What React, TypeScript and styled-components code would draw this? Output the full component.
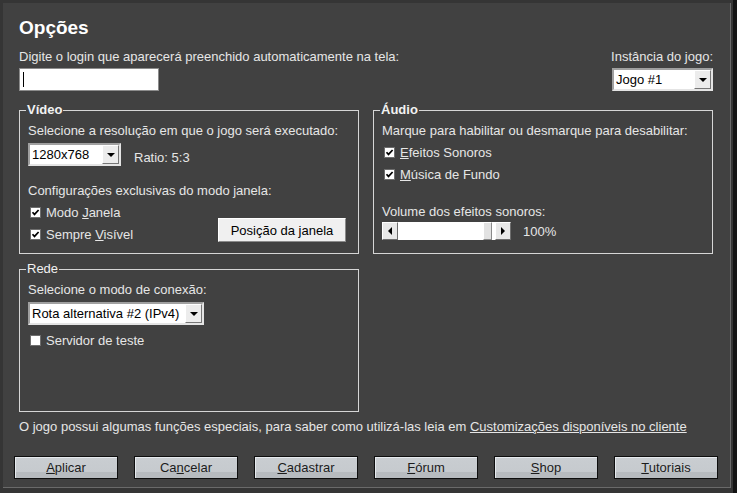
import styled, { createGlobalStyle } from 'styled-components';

const GlobalStyle = createGlobalStyle`
  html, body {
    margin: 0;
    padding: 0;
    background: #353535;
  }
  body {
    font-family: "Liberation Sans", Arial, sans-serif;
    font-size: 13px;
  }
`;

const Frame = styled.div`
  width: 737px;
  height: 493px;
  box-sizing: border-box;
  padding: 3px 0 0 3px;
  background: linear-gradient(to right, #353535 733px, #141414 733px);
`;

const Window = styled.div`
  width: 728px;
  height: 485px;
  box-sizing: border-box;
  background: #414141;
  border-right: 1px solid #6a6a6a;
  border-bottom: 1px solid #6a6a6a;
  padding: 14px 17px 0 16px;
  display: flex;
  flex-direction: column;
  color: #e6e6e6;
`;

const Title = styled.h1`
  margin: 0;
  font-size: 19px;
  line-height: 22px;
  font-weight: 700;
  color: #ffffff;
`;

const LoginRow = styled.div`
  display: flex;
  justify-content: space-between;
  margin-top: 10px;
`;

const Field = styled.div<{ $right?: boolean }>`
  display: flex;
  flex-direction: column;
  align-items: ${p => (p.$right ? 'flex-end' : 'flex-start')};
  gap: 4px;
`;

const Text = styled.div<{ $mt?: number }>`
  line-height: 15px;
  margin-top: ${p => p.$mt ?? 0}px;
  white-space: nowrap;
`;

const LoginBox = styled.div`
  position: relative;
  width: 140px;
  height: 23px;
  box-sizing: border-box;
  border: 1px solid #8c8c8c;
  background: #ffffff;

  &::after {
    content: '';
    position: absolute;
    left: 3px;
    top: 3px;
    width: 1px;
    height: 15px;
    background: #000;
  }
`;

const LoginInput = styled.input`
  width: 100%;
  height: 100%;
  box-sizing: border-box;
  border: none;
  outline: none;
  padding: 0 3px;
  background: transparent;
  caret-color: transparent;
  font: inherit;
`;

const ComboBox = styled.div<{ $w: number; $mt?: number }>`
  width: ${p => p.$w}px;
  height: 23px;
  box-sizing: border-box;
  margin-top: ${p => p.$mt ?? 0}px;
  display: flex;
  align-items: center;
  justify-content: space-between;
  background: #ffffff;
  border: 2px solid;
  border-color: #a0a0a0 #e4e4e4 #e4e4e4 #a0a0a0;
  padding: 0 0 0 2px;
  color: #000;
  line-height: 15px;
  white-space: nowrap;
`;

const ComboButton = styled.span`
  width: 17px;
  height: 19px;
  box-sizing: border-box;
  background: #ececec;
  border: 1px solid;
  border-color: #ffffff #767676 #767676 #ffffff;
  display: flex;
  align-items: center;
  justify-content: center;

  &::after {
    content: '';
    border-left: 4px solid transparent;
    border-right: 4px solid transparent;
    border-top: 4px solid #000;
  }
`;

const GroupGrid = styled.div`
  display: grid;
  grid-template-columns: 340px 340px;
  column-gap: 14px;
  row-gap: 7px;
  margin-top: 11px;
`;

const Group = styled.fieldset<{ $h?: number }>`
  margin: 0;
  padding: 5px 8px 8px;
  border: 1px solid #d6d6d6;
  min-width: 0;
  box-sizing: border-box;
  ${p => (p.$h ? `height: ${p.$h}px;` : '')}
`;

const Legend = styled.legend<{ $bold?: boolean }>`
  padding: 0 1px;
  margin-left: -2px;
  line-height: 16px;
  font-weight: ${p => (p.$bold ? 700 : 400)};
  color: #f2f2f2;
`;

const InlineRow = styled.div<{ $mt?: number }>`
  display: flex;
  align-items: center;
  gap: 13px;
  margin-top: ${p => p.$mt ?? 0}px;
`;

const Ratio = styled.span`
  line-height: 15px;
  margin-top: 6px;
`;

const CheckArea = styled.div<{ $mt?: number }>`
  display: flex;
  justify-content: space-between;
  margin-top: ${p => p.$mt ?? 0}px;
`;

const CheckList = styled.div<{ $mt?: number }>`
  display: flex;
  flex-direction: column;
  margin-top: ${p => p.$mt ?? 0}px;
`;

const CheckRow = styled.label`
  display: flex;
  align-items: center;
  gap: 5px;
  height: 22px;
  padding-left: 2px;
  white-space: nowrap;
`;

const Box = styled.span`
  width: 11px;
  height: 11px;
  box-sizing: border-box;
  border: 1px solid #6e6e6e;
  background: #ffffff;
  display: flex;
  align-items: center;
  justify-content: center;
`;

const WinButton = styled.button`
  align-self: flex-end;
  margin: 0 4px 3px 0;
  width: 128px;
  height: 24px;
  box-sizing: border-box;
  background: #f0f0f0;
  border: 1px solid;
  border-color: #ffffff #8a8a8a #8a8a8a #ffffff;
  font: inherit;
  color: #000;
  padding: 0;
`;

const SliderRow = styled.div`
  display: flex;
  align-items: center;
  gap: 12px;
  margin-top: 3px;
`;

const Slider = styled.div`
  display: flex;
  width: 129px;
  height: 18px;
`;

const ArrowBtn = styled.span<{ $dir: 'left' | 'right' }>`
  width: 16px;
  height: 18px;
  box-sizing: border-box;
  background: #e8e8e8;
  border: 1px solid;
  border-color: #ffffff #6e6e6e #6e6e6e #ffffff;
  display: flex;
  align-items: center;
  justify-content: center;

  &::after {
    content: '';
    border-top: 4px solid transparent;
    border-bottom: 4px solid transparent;
    ${p =>
      p.$dir === 'left'
        ? 'border-right: 4px solid #000;'
        : 'border-left: 4px solid #000;'}
  }
`;

const Track = styled.span`
  flex: 1;
  background: #ffffff;
  display: flex;
  justify-content: flex-end;
  padding-right: 3px;
`;

const Thumb = styled.span`
  width: 9px;
  box-sizing: border-box;
  background: #e2e2e2;
  border: 1px solid;
  border-color: #ffffff #8a8a8a #8a8a8a #ffffff;
`;

const Footer = styled.div`
  margin-top: 7px;
  line-height: 15px;
  white-space: nowrap;
`;

const Link = styled.a`
  color: inherit;
  text-decoration: underline;
`;

const ButtonRow = styled.div`
  display: flex;
  gap: 16px;
  margin: 22px -5px 0;
`;

const FooterButton = styled.button`
  width: 104px;
  height: 23px;
  box-sizing: border-box;
  padding: 0;
  border: 1px solid #0e0e0e;
  background: linear-gradient(to bottom, #c9cdd1 0%, #c6cace 70%, #b7bbbf 70%, #b7bbbf 100%);
  box-shadow: inset 1px 1px 0 #e6eaee;
  font: inherit;
  color: #1c1c1c;
`;

const Check = () => (
  <svg width="9" height="9" viewBox="0 0 9 9">
    <polyline points="1.5,4.2 3.5,6.4 7.6,2" fill="none" stroke="#000" strokeWidth="1.7" />
  </svg>
);

function CheckBox({ checked, children }: { checked?: boolean; children: React.ReactNode }) {
  return (
    <CheckRow>
      <Box>{checked && <Check />}</Box>
      <span>{children}</span>
    </CheckRow>
  );
}

function Combo({ value, width, mt }: { value: string; width: number; mt?: number }) {
  return (
    <ComboBox $w={width} $mt={mt}>
      <span>{value}</span>
      <ComboButton />
    </ComboBox>
  );
}

const buttons: [string, string, string][] = [
  ['', 'A', 'plicar'],
  ['Ca', 'n', 'celar'],
  ['', 'C', 'adastrar'],
  ['', 'F', 'órum'],
  ['', 'S', 'hop'],
  ['', 'T', 'utoriais'],
];

export default function App() {
  return (
    <Frame>
      <GlobalStyle />
      <Window>
        <Title>Opções</Title>

        <LoginRow>
          <Field>
            <Text>Digite o login que aparecerá preenchido automaticamente na tela:</Text>
            <LoginBox>
              <LoginInput type="text" />
            </LoginBox>
          </Field>
          <Field $right>
            <Text>Instância do jogo:</Text>
            <Combo value="Jogo #1" width={101} />
          </Field>
        </LoginRow>

        <GroupGrid>
          <Group>
            <Legend $bold>Vídeo</Legend>
            <Text>Selecione a resolução em que o jogo será executado:</Text>
            <InlineRow $mt={5}>
              <Combo value="1280x768" width={93} />
              <Ratio>Ratio: 5:3</Ratio>
            </InlineRow>
            <Text $mt={17}>Configurações exclusivas do modo janela:</Text>
            <CheckArea $mt={3}>
              <CheckList>
                <CheckBox checked>
                  Modo <u>J</u>anela
                </CheckBox>
                <CheckBox checked>
                  Sempre <u>V</u>isível
                </CheckBox>
              </CheckList>
              <WinButton>Posição da janela</WinButton>
            </CheckArea>
          </Group>

          <Group>
            <Legend $bold>Áudio</Legend>
            <Text>Marque para habilitar ou desmarque para desabilitar:</Text>
            <CheckList $mt={3}>
              <CheckBox checked>
                <u>E</u>feitos Sonoros
              </CheckBox>
              <CheckBox checked>
                <u>M</u>úsica de Fundo
              </CheckBox>
            </CheckList>
            <Text $mt={19}>Volume dos efeitos sonoros:</Text>
            <SliderRow>
              <Slider>
                <ArrowBtn $dir="left" />
                <Track>
                  <Thumb />
                </Track>
                <ArrowBtn $dir="right" />
              </Slider>
              <span>100%</span>
            </SliderRow>
          </Group>

          <Group $h={151}>
            <Legend>Rede</Legend>
            <Text>Selecione o modo de conexão:</Text>
            <Combo value="Rota alternativa #2 (IPv4)" width={176} mt={5} />
            <CheckList $mt={4}>
              <CheckBox>Servidor de teste</CheckBox>
            </CheckList>
          </Group>
        </GroupGrid>

        <Footer>
          O jogo possui algumas funções especiais, para saber como utilizá-las leia em{' '}
          <Link href="#">Customizações disponíveis no cliente</Link>
        </Footer>

        <ButtonRow>
          {buttons.map(([pre, key, post]) => (
            <FooterButton key={pre + key + post}>
              {pre}
              <u>{key}</u>
              {post}
            </FooterButton>
          ))}
        </ButtonRow>
      </Window>
    </Frame>
  );
}
